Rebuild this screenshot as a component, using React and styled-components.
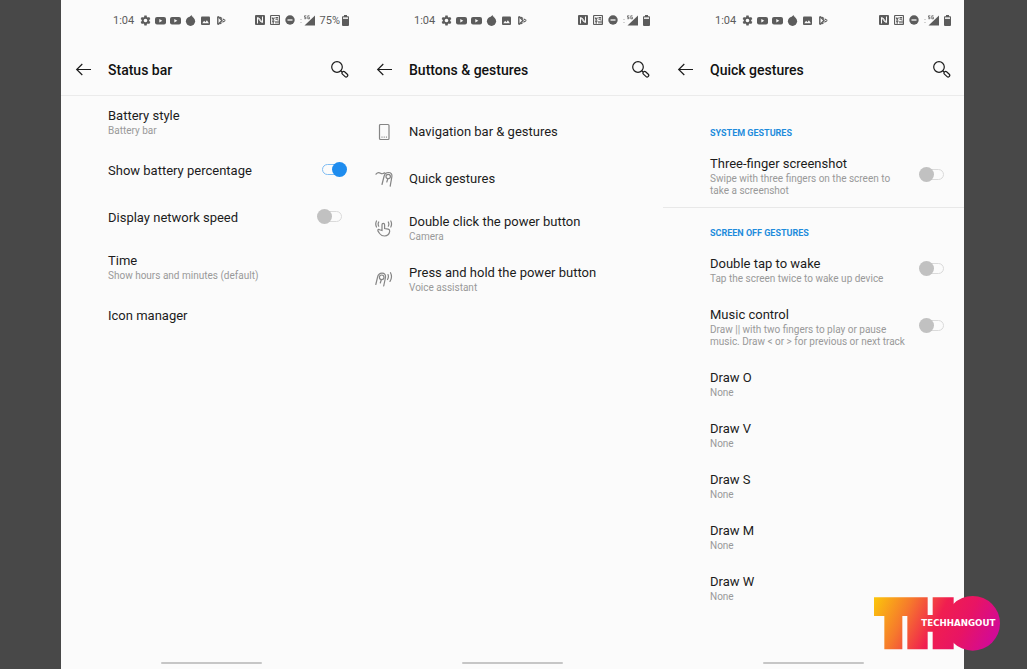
import styled, { createGlobalStyle } from "styled-components";

const GlobalStyle = createGlobalStyle`
  *,
  *::before,
  *::after {
    box-sizing: border-box;
  }
  body {
    margin: 0;
    background: #484848;
    font-family: Roboto, "Noto Sans", sans-serif;
    color: #1c1c1c;
  }
`;

const Page = styled.div`
  position: relative;
  display: grid;
  grid-template-columns: repeat(3, 1fr);
  min-height: 100vh;
  padding: 0 63px 0 61px;
`;

const Phone = styled.section`
  display: flex;
  flex-direction: column;
  background: #fbfbfb;
`;

const StatusBar = styled.div`
  display: flex;
  align-items: center;
  justify-content: space-between;
  height: 40px;
  padding: 0 13px 0 52px;
  font-size: 11px;
  color: #5c5c5c;
`;

const StatusGroup = styled.div`
  display: flex;
  align-items: center;
  gap: ${(props) => props.$gap};
`;

const Clock = styled.span`
  margin-right: 2px;
`;

const Battery = styled.span`
  display: flex;
  align-items: center;
  gap: 2px;
`;

const Header = styled.header`
  display: flex;
  align-items: center;
  height: 56px;
  padding: 4px 13px 0 14px;
  border-bottom: 1px solid #ebebeb;
`;

const IconButton = styled.button`
  display: flex;
  padding: 0;
  border: 0;
  background: none;
  color: #1c1c1c;
`;

const Title = styled.h1`
  flex: 1;
  margin: 0 0 0 16px;
  font-size: 14px;
  line-height: 18px;
  font-weight: 500;
  color: #111111;
`;

const List = styled.div`
  padding-top: ${(props) => (props.$spaced ? "12px" : "0")};
`;

const Row = styled.button`
  display: flex;
  align-items: center;
  width: 100%;
  min-height: 47px;
  padding: 11px 15px 10px 0;
  border: 0;
  background: none;
  font: inherit;
  color: inherit;
  text-align: left;
`;

const RowIcon = styled.span`
  display: flex;
  flex: none;
  width: 47px;
  padding-left: 13px;
`;

const RowText = styled.span`
  flex: 1;
`;

const Name = styled.span`
  display: block;
  font-size: 13px;
  line-height: 18px;
`;

const Note = styled.span`
  display: block;
  max-width: 200px;
  font-size: 10px;
  line-height: 12px;
  color: #999999;
`;

const Switch = styled.input`
  appearance: none;
  position: relative;
  flex: none;
  width: 30px;
  height: 15px;
  margin: 0 0 3px;

  &::before,
  &::after {
    content: "";
    position: absolute;
  }
  &::before {
    top: 2px;
    left: 5px;
    width: 20px;
    height: 11px;
    border: 1px solid #dadada;
    border-radius: 6px;
  }
  &::after {
    top: 0;
    left: 0;
    width: 15px;
    height: 15px;
    border-radius: 50%;
    background: #c1c1c1;
  }
  &:checked::before {
    border-color: #7fbdf3;
  }
  &:checked::after {
    left: 15px;
    background: #1e8cee;
  }
`;

const Section = styled.h2`
  margin: 0;
  padding: 19px 0 5px 47px;
  font-size: 9px;
  line-height: 12px;
  font-weight: 700;
  color: #1e8cdc;
`;

const Divider = styled.hr`
  width: 100%;
  height: 1px;
  margin: 0;
  border: 0;
  background: #e8e8e8;
`;

const HomeBar = styled.div`
  width: 101px;
  height: 2px;
  margin: auto auto 5px;
  border-radius: 1px;
  background: #c6c6c6;
`;

const Logo = styled.svg`
  position: absolute;
  right: 27px;
  bottom: 18px;
`;

const LogoText = styled.text`
  font-family: "DejaVu Sans", sans-serif;
  font-size: 26px;
  font-weight: 700;
`;

function Gear() {
  return (
    <svg width="11" height="11" viewBox="0 0 24 24" fill="currentColor">
      <path
        fillRule="evenodd"
        d="M9.5 1h5l.6 3.400 1.800 1 3.200-1.200 2.500 4.300-2.600 2.300v2.400l2.600 2.300-2.500 4.300-3.200-1.200-1.800 1-.6 3.400h-5l-.6-3.400-1.800-1-3.200 1.200-2.500-4.300L4 13.200v-2.400L1.400 8.500l2.500-4.300 3.200 1.200 1.800-1zM12 8a4 4 0 1 0 0 8 4 4 0 0 0 0-8z"
      />
    </svg>
  );
}

function Video() {
  return (
    <svg width="11" height="11" viewBox="0 0 11 11">
      <rect x="0" y="2" width="11" height="7.5" rx="2" fill="currentColor" />
      <path d="M4.3 4v3.500l3-1.750z" fill="#fbfbfb" />
    </svg>
  );
}

function Tomato() {
  return (
    <svg width="11" height="11" viewBox="0 0 11 11" fill="currentColor">
      <circle cx="5.5" cy="6.3" r="4.6" />
      <path d="M4 2.500 6.500 0l.5 1.500L8.500 2 7 3.500z" />
    </svg>
  );
}

function Picture() {
  return (
    <svg width="11" height="11" viewBox="0 0 11 11">
      <rect x="1" y="1.500" width="9" height="8.500" rx="1" fill="currentColor" />
      <path d="M2.300 8.200l1.800-2.400 1.300 1.500 1.500-2 2 2.900z" fill="#fbfbfb" />
    </svg>
  );
}

function Play() {
  return (
    <svg width="11" height="11" viewBox="0 0 11 11" fill="none" stroke="currentColor">
      <path d="M2.800 1.500v8" strokeWidth="1.400" />
      <path d="M3 1.500l4 4-4 4" strokeWidth="1.300" />
      <path d="M4.500 2l6 3.500-6 3.500" strokeWidth="1.100" strokeDasharray="3 .8" />
    </svg>
  );
}

function Nfc() {
  return (
    <svg width="10" height="10" viewBox="0 0 10 10" fill="none">
      <rect width="10" height="10" rx="1" fill="currentColor" />
      <path d="M2.500 8.500v-6l4 5M7.500 1.500v6l-4-5" stroke="#fbfbfb" />
    </svg>
  );
}

function Volte() {
  return (
    <svg width="10" height="10" viewBox="0 0 10 10" fill="none" stroke="currentColor">
      <rect x=".5" y=".5" width="9" height="9" rx="1" strokeWidth="1.200" />
      <path
        d="M2 2.500l1.200 2 1.200-2M5.500 2.500h2.700M5.500 4.200h2.700M2 6.200h2.500M3.200 6.200v2.500M6 6v2.500M8 5.500v3"
        strokeWidth="1.200"
      />
    </svg>
  );
}

function Dnd() {
  return (
    <svg width="10" height="10" viewBox="0 0 10 10">
      <circle cx="5" cy="5" r="4.700" fill="currentColor" />
      <path d="M2.500 5h5" stroke="#fbfbfb" strokeWidth="1.300" />
    </svg>
  );
}

function Signal() {
  return (
    <svg width="15" height="11" viewBox="0 0 15 11" fill="currentColor">
      <path d="M15 .5v10H4.500z" />
      <path d="M.5 4h1v1h-1zM.5 7h1v1h-1z" opacity=".5" />
      <path
        d="M6.300.8H4.500v1.500h1.500v1.400H4.300M9.500.8H7.800v3h1.700V2.400h-.8"
        fill="none"
        stroke="currentColor"
        strokeWidth=".8"
      />
    </svg>
  );
}

function BatteryIcon() {
  return (
    <svg width="7" height="11" viewBox="0 0 7 11">
      <path d="M2 0h3v1.200h1.300l.7.6v8.500l-.7.7H.7L0 10.300V1.800l.7-.6H2z" fill="currentColor" />
      <path d="M1 2.300h5v1.700H1z" fill="#e4e4e4" />
    </svg>
  );
}

function BackArrow() {
  return (
    <svg width="17" height="17" viewBox="0 0 17 17" fill="none" stroke="currentColor" strokeWidth="1.200">
      <path d="M16 8.500H2M7.300 3 1.700 8.500 7.300 14" />
    </svg>
  );
}

function Search() {
  return (
    <svg width="19" height="19" viewBox="0 0 19 19" fill="none" stroke="currentColor" strokeWidth="1.200">
      <circle cx="7" cy="7" r="5.300" />
      <path d="M10.800 10.800l1.500 1.300" />
      <rect x="11.600" y="12.600" width="6.500" height="3.200" rx="1.400" transform="rotate(43 14.850 14.200)" />
    </svg>
  );
}

const lineIcon = {
  width: 18,
  height: 18,
  viewBox: "0 0 18 18",
  fill: "none",
  stroke: "#858585",
  strokeWidth: 1.2,
  strokeLinecap: "round",
};

function PhoneIcon() {
  return (
    <svg {...lineIcon}>
      <rect x="4.500" y="1.500" width="9.500" height="15" rx="1" />
      <path d="M6.500 14.200h5.500" strokeDasharray="1 1.200" strokeLinecap="butt" />
    </svg>
  );
}

function SwipeIcon() {
  return (
    <svg {...lineIcon}>
      <path d="M1 4.200c1.500-2 3-2 4.500-1s2.800.6 4.200-.4M7 14.500l2-8c.6-2.700 2.200-4 4.500-4 2.400 0 3.800 1.500 3.400 4L15.200 16.200" />
      <path d="M11.800 12l1-3.200" />
      <circle cx="13.200" cy="6.500" r="2.200" />
    </svg>
  );
}

function TapIcon() {
  return (
    <svg {...lineIcon}>
      <path d="M7 11.500V5.700c0-1.800 2.600-1.800 2.600 0v3.800l3.600.7c1.200.3 1.700 1 1.500 2.200-.5 3-2.200 4.600-5.200 4.600-2.300 0-3.700-.8-4.900-2.500l-1.700-2.600c-.4-1.200.8-1.800 1.700-1.200z" />
      <path d="M3.700 3c-.8 1.500-.8 2.700 0 4.200M1.500 2c-1 2-1 4 0 6M13.300 3c.8 1.500.8 2.700 0 4.200M15.800 2c1 2 1 4 0 6" />
    </svg>
  );
}

function HoldIcon() {
  return (
    <svg {...lineIcon}>
      <path d="M.8 14.500l1.700-7.200c.6-2.700 2-4.200 4.500-4.200 2.600 0 4 1.700 3.500 4.400L8.700 16" />
      <path d="M5.300 13l.9-3M13 4.500c.7 1.800.5 3.500-.5 5M15.500 2.700c1.500 3 1.200 6-.5 8.700" />
      <circle cx="6.700" cy="7.300" r="2.300" />
    </svg>
  );
}

function Screen({ title, percent, children }) {
  return (
    <Phone>
      <StatusBar>
        <StatusGroup $gap="4px">
          <Clock>1:04</Clock>
          <Gear />
          <Video />
          <Video />
          <Tomato />
          <Picture />
          <Play />
        </StatusGroup>
        <StatusGroup $gap="5px">
          <Nfc />
          <Volte />
          <Dnd />
          <Signal />
          <Battery>
            {percent}
            <BatteryIcon />
          </Battery>
        </StatusGroup>
      </StatusBar>
      <Header>
        <IconButton aria-label="Back">
          <BackArrow />
        </IconButton>
        <Title>{title}</Title>
        <IconButton aria-label="Search">
          <Search />
        </IconButton>
      </Header>
      {children}
      <HomeBar />
    </Phone>
  );
}

function Item({ icon, name, note }) {
  return (
    <Row type="button">
      <RowIcon>{icon}</RowIcon>
      <RowText>
        <Name>{name}</Name>
        {note && <Note>{note}</Note>}
      </RowText>
    </Row>
  );
}

function SwitchItem({ name, note, on }) {
  return (
    <Row as="label">
      <RowIcon />
      <RowText>
        <Name>{name}</Name>
        {note && <Note>{note}</Note>}
      </RowText>
      <Switch type="checkbox" defaultChecked={on} />
    </Row>
  );
}

export default function App() {
  const letters = ["O", "V", "S", "M", "W"];
  return (
    <>
      <GlobalStyle />
      <Page>
        <Screen title="Status bar" percent="75%">
          <List>
            <Item name="Battery style" note="Battery bar" />
            <SwitchItem name="Show battery percentage" on />
            <SwitchItem name="Display network speed" />
            <Item name="Time" note="Show hours and minutes (default)" />
            <Item name="Icon manager" />
          </List>
        </Screen>
        <Screen title="Buttons & gestures">
          <List $spaced>
            <Item icon={<PhoneIcon />} name="Navigation bar & gestures" />
            <Item icon={<SwipeIcon />} name="Quick gestures" />
            <Item icon={<TapIcon />} name="Double click the power button" note="Camera" />
            <Item icon={<HoldIcon />} name="Press and hold the power button" note="Voice assistant" />
          </List>
        </Screen>
        <Screen title="Quick gestures">
          <List $spaced>
            <Section>SYSTEM GESTURES</Section>
            <SwitchItem
              name="Three-finger screenshot"
              note="Swipe with three fingers on the screen to take a screenshot"
            />
            <Divider />
            <Section>SCREEN OFF GESTURES</Section>
            <SwitchItem name="Double tap to wake" note="Tap the screen twice to wake up device" />
            <SwitchItem
              name="Music control"
              note="Draw || with two fingers to play or pause music. Draw < or > for previous or next track"
            />
            {letters.map((letter) => (
              <Item key={letter} name={`Draw ${letter}`} note="None" />
            ))}
          </List>
        </Screen>
        <Logo width="126" height="55" viewBox="0 0 378 165">
          <defs>
            <linearGradient id="tho" gradientUnits="userSpaceOnUse" x1="0" y1="0" x2="340" y2="165">
              <stop offset="0" stopColor="#fbc80a" />
              <stop offset="0.28" stopColor="#f6792c" />
              <stop offset="0.54" stopColor="#f01e50" />
              <stop offset="0.75" stopColor="#e81464" />
              <stop offset="1" stopColor="#d20a96" />
            </linearGradient>
          </defs>
          <path
            d="M0 4H161V57H176V4H239V160H176V107H161V160H100V60H85V160H31V60H0z"
            fill="url(#tho)"
          />
          <circle cx="296" cy="82" r="82" fill="url(#tho)" />
          <LogoText x="142" y="91" fill="#ffffff">
            TECHHANGOUT
          </LogoText>
        </Logo>
      </Page>
    </>
  );
}
